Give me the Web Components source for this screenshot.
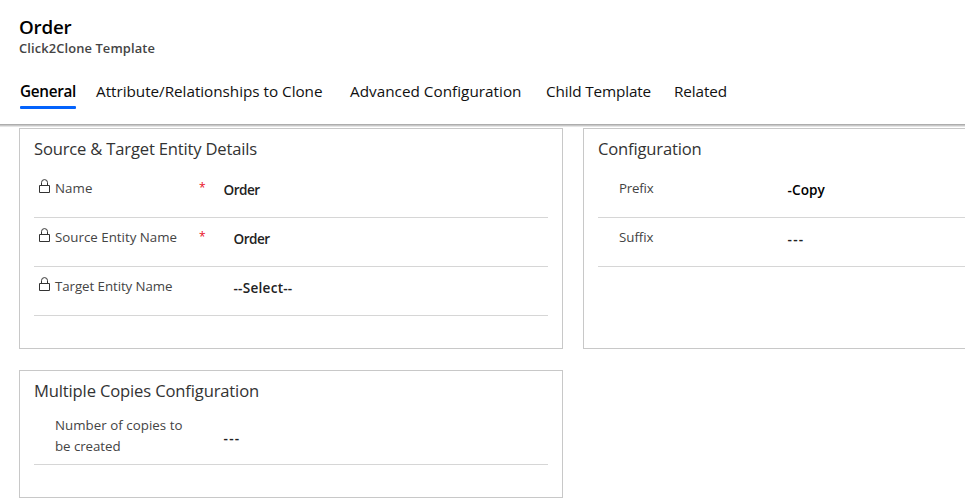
<!DOCTYPE html>
<html lang="en">
<head>
<meta charset="utf-8">
<title>Order - Click2Clone Template</title>
<style>
html,body{margin:0;background:#fff;overflow:hidden}
body{width:965px;height:504px;font-family:"Open Sans","Noto Sans",sans-serif;color:#333}
</style>
</head>
<body>
<record-page></record-page>
<script>
// One line of text, tracked so that it spans the width given in pixels.
class FitText extends HTMLElement {
  constructor() {
    super();
    this.attachShadow({mode:'open'}).innerHTML =
      '<style>:host{display:block;white-space:nowrap}span{display:inline-block}</style><span><slot></slot></span>';
  }
  connectedCallback() {
    const width = parseFloat(this.getAttribute('width'));
    const span = this.shadowRoot.querySelector('span');
    const n = this.textContent.length;
    if (width) span.style.letterSpacing = ((width - span.getBoundingClientRect().width) / n) + 'px';
  }
}

class LockIcon extends HTMLElement {
  constructor() {
    super();
    this.attachShadow({mode:'open'}).innerHTML = `
      <style>:host{display:block;width:11px;height:14px}svg{display:block}</style>
      <svg width="11" height="14" viewBox="0 0 11 14" fill="none" stroke="#333" stroke-width="1">
        <path d="M.5 6.5h10v7H.5z"/><path d="M2.5 6.5V3.6a3 3 0 0 1 6 0v2.9"/>
      </svg>`;
  }
}

class TabItem extends HTMLElement {
  constructor() {
    super();
    this.attachShadow({mode:'open'}).innerHTML = `
      <style>
        :host{display:block;height:28px;box-sizing:border-box;font-size:15.3px;line-height:22px;color:#111}
        :host([selected]){font-weight:600;color:#000}
        :host([selected])::after{content:"";display:block;height:3px;margin-top:4px;border-radius:1px;background:#0463fc}
      </style><slot></slot>`;
  }
}

class RecordHeader extends HTMLElement {
  constructor() {
    super();
    this.attachShadow({mode:'open'}).innerHTML = `
      <style>
        :host{display:block;height:127px;box-sizing:border-box;padding:14px 0 0 19px;background:linear-gradient(#adadad 0 1px,#c8c8c8 1px 2px,#e5e5e5 2px 3px) 0 124px/100% 3px no-repeat}
        .title{font-size:18.8px;line-height:26px;font-weight:600;color:#000}
        .sub{font-size:12.9px;line-height:18px;font-weight:600;color:#444;margin-top:-1px}
        nav{display:flex;margin:23px 0 0 1px}
      </style>
      <fit-text class="title" width="52.5">Order</fit-text>
      <fit-text class="sub" width="136">Click2Clone Template</fit-text>
      <nav>
        <tab-item selected style="width:56px"><fit-text width="56">General</fit-text></tab-item>
        <tab-item style="margin-left:20px"><fit-text width="226.5">Attribute/Relationships to Clone</fit-text></tab-item>
        <tab-item style="margin-left:27.5px"><fit-text width="171.5">Advanced Configuration</fit-text></tab-item>
        <tab-item style="margin-left:24.5px"><fit-text width="105">Child Template</fit-text></tab-item>
        <tab-item style="margin-left:23px"><fit-text width="53">Related</fit-text></tab-item>
      </nav>`;
  }
}

class FormSection extends HTMLElement {
  constructor() {
    super();
    this.attachShadow({mode:'open'}).innerHTML = `
      <style>
        :host{display:block;box-sizing:border-box;border:1px solid #c8c8c8;padding:8px 14px 0;background:#fff}
        .head{font-size:16.6px;line-height:24px;color:#333;height:32px}
      </style>
      <div class="head"><slot name="heading"></slot></div><slot></slot>`;
  }
}

class FormField extends HTMLElement {
  constructor() {
    super();
    this.attachShadow({mode:'open'}).innerHTML = `
      <style>
        :host{display:grid;grid-template-columns:21px 144px 24.5px 1fr;height:49px;box-sizing:border-box;border-bottom:1px solid #d6d6d6;padding-top:9px;font-size:13.3px;line-height:20px;color:#444}
        :host([tall]){height:54px;padding-top:4px;line-height:21px}
        lock-icon{margin:1px 0 0 5px;visibility:hidden}
        :host([locked]) lock-icon{visibility:visible}
        .req{color:#e81123;font-size:12px;visibility:hidden}
        :host([required]) .req{visibility:visible}
        .value{font-size:13.6px;font-weight:600;color:#222;margin-top:2px;padding-left:var(--value-indent,0px)}
        :host([tall]) .value{margin-top:12px}
        :host([strong]) .value{color:#000}
      </style>
      <lock-icon></lock-icon><div><slot></slot></div><div class="req">*</div>
      <div class="value"><slot name="value"></slot></div>`;
  }
}

class RecordPage extends HTMLElement {
  constructor() {
    super();
    this.attachShadow({mode:'open'}).innerHTML = `
      <style>
        :host{display:block;width:965px;height:504px;overflow:hidden}
        main{display:grid;grid-template-columns:544px 544px;grid-template-rows:221px 128px;column-gap:20px;row-gap:21px;padding:1px 0 0 19px}
        .wide{--value-indent:10px}
      </style>
      <record-header></record-header>
      <main>
        <form-section>
          <fit-text slot="heading" width="223">Source &amp; Target Entity Details</fit-text>
          <form-field locked required><fit-text width="37.5">Name</fit-text><fit-text slot="value" width="36">Order</fit-text></form-field>
          <form-field locked required class="wide"><fit-text width="122">Source Entity Name</fit-text><fit-text slot="value" width="36">Order</fit-text></form-field>
          <form-field locked class="wide"><fit-text width="117.5">Target Entity Name</fit-text><fit-text slot="value" width="59">--Select--</fit-text></form-field>
        </form-section>
        <form-section>
          <fit-text slot="heading" width="103.5">Configuration</fit-text>
          <form-field strong><fit-text width="34.5">Prefix</fit-text><fit-text slot="value" width="37.5">-Copy</fit-text></form-field>
          <form-field><fit-text width="34.5">Suffix</fit-text><fit-text slot="value" width="17">---</fit-text></form-field>
        </form-section>
        <form-section>
          <fit-text slot="heading" width="225">Multiple Copies Configuration</fit-text>
          <form-field tall><fit-text width="127.5">Number of copies to</fit-text><fit-text width="65.5">be created</fit-text><fit-text slot="value" width="17">---</fit-text></form-field>
        </form-section>
      </main>`;
  }
}

customElements.define('lock-icon', LockIcon);
customElements.define('tab-item', TabItem);
customElements.define('record-header', RecordHeader);
customElements.define('form-section', FormSection);
customElements.define('form-field', FormField);
customElements.define('record-page', RecordPage);
// Defined last: its measurements need every parent's styles in place.
customElements.define('fit-text', FitText);
</script>
</body>
</html>
